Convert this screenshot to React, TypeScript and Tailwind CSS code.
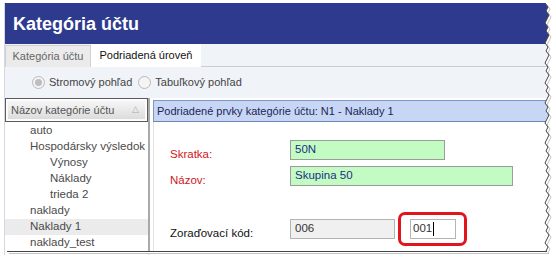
import React from "react";

const TREE = [
  { label: "auto", level: 0 },
  { label: "Hospodársky výsledok", level: 0 },
  { label: "Výnosy", level: 1 },
  { label: "Náklady", level: 1 },
  { label: "trieda 2", level: 1 },
  { label: "naklady", level: 0 },
  { label: "Naklady 1", level: 0, selected: true },
  { label: "naklady_test", level: 0 },
];

function Radio({ checked, label }: { checked?: boolean; label: string }) {
  return (
    <div className="flex items-center gap-[4px]">
      <span className="w-[13px] h-[13px] rounded-full border border-[#b9b9b9] bg-[#f4f4f4] flex items-center justify-center">
        {checked && <span className="w-[7px] h-[7px] rounded-full bg-[#bdbdbd]" />}
      </span>
      <span className="text-[#444]">{label}</span>
    </div>
  );
}

function TornEdge() {
  // jagged right + bottom edge, like a cut-out screenshot
  const right: string[] = [];
  for (let y = 0; y <= 250; y += 4) {
    const x = 547 + ((y * 7) % 5) - 2;
    right.push(`${x},${y + 3}`);
  }
  const bottom: string[] = [];
  for (let x = 547; x >= 4; x -= 4) {
    const y = 252 + ((x * 3) % 4) - 1.5;
    bottom.push(`${x},${y}`);
  }
  const pts = [...right, ...bottom].join(" ");
  return (
    <svg className="absolute left-0 top-0 pointer-events-none" width={556} height={264}>
      <polygon points={`${pts} 556,264 556,0`} fill="#ffffff" />
      <polyline points={pts} fill="none" stroke="#c4c4c4" strokeWidth={1} transform="translate(2,2)" />
      <polyline points={pts} fill="none" stroke="#444" strokeWidth={1} />
    </svg>
  );
}

export default function App() {
  return (
    <div
      className="relative w-[556px] h-[264px] bg-white overflow-hidden text-[11px]"
      style={{ fontFamily: "'Liberation Sans', Arial, sans-serif" }}
    >
      <div className="ml-[4px] mt-[3px] w-[548px] h-[252px] flex flex-col border-l border-[#d4d8e2] bg-[#f0f3f8]">
        {/* Title bar */}
        <div className="h-[41px] bg-[#2e3a8e] flex items-center pl-[8px]">
          <h1 className="text-white text-[18px] font-bold leading-none">Kategória účtu</h1>
        </div>

        {/* Tabs */}
        <div className="h-[23px] flex items-end">
          <div className="h-[22px] w-[86px] bg-[#ebebeb] border border-[#d0d0d0] border-b-0 flex items-center justify-center text-[#666]">
            Kategória účtu
          </div>
          <div className="h-[23px] w-[110px] bg-white flex items-center justify-center text-[#111]">
            Podriadená úroveň
          </div>
          <div className="flex-1 border-b border-[#c9ccd4]" />
        </div>

        {/* View mode */}
        <div className="h-[31px] flex items-center pl-[27px] gap-[6px]">
          <Radio checked label="Stromový pohľad" />
          <Radio label="Tabuľkový pohľad" />
        </div>

        {/* Content */}
        <div className="flex-1 flex bg-white">
          <div className="w-[145px] flex flex-col border-r-2 border-[#a9a9a9]">
            <div className="h-[24px] border border-[#5a5a5a] p-[1px]">
              <div className="h-full bg-gradient-to-b from-[#f6f6f6] to-[#dcdcdc] border border-[#fafafa] flex items-center justify-between pl-[3px] pr-[6px] text-[#555]">
                <span className="whitespace-nowrap">Názov kategórie účtu</span>
                <span className="text-[#aaa] text-[9px]">△</span>
              </div>
            </div>
            <div className="pt-[1px] flex flex-col">
              {TREE.map((t) => (
                <div
                  key={t.label}
                  className={`h-[16px] flex items-center whitespace-nowrap text-[#4a4a4a] text-[11.5px] ${t.selected ? "bg-[#ebebeb]" : ""}`}
                  style={{ paddingLeft: t.level ? 45 : 25 }}
                >
                  {t.label}
                </div>
              ))}
            </div>
          </div>

          <div className="flex-1 flex flex-col pl-[3px] pt-[2px] pr-[3px]">
            <div className="h-[22px] bg-[#c7d6f5] border border-[#7f95c4] border-b-[#6d84b5] flex items-center pl-[3px] text-[#1c2655]">
              Podriadené prvky kategórie účtu: N1 - Naklady 1
            </div>
            <div className="flex-1 border-l border-[#e2e2e2] pt-[18px] pl-[16px] text-[11.5px]">
              <div className="flex items-center h-[20px] mb-[6px]">
                <span className="w-[120px] text-[#d0161b] pt-[10px]">Skratka:</span>
                <div className="w-[155px] h-[20px] bg-[#c3fcc3] border border-[#9c9c9c] flex items-center pl-[4px] text-[#1b2f86]">
                  50N
                </div>
              </div>
              <div className="flex items-center h-[20px]">
                <span className="w-[120px] text-[#d0161b] pt-[10px]">Názov:</span>
                <div className="w-[223px] h-[20px] bg-[#c3fcc3] border border-[#9c9c9c] flex items-center pl-[4px] text-[#1b2f86]">
                  Skupina 50
                </div>
              </div>
              <div className="flex items-center h-[34px] mt-[26px]">
                <span className="w-[120px] text-[#111] pt-[9px]">Zoraďovací kód:</span>
                <div className="w-[105px] h-[20px] bg-[#f0f0f0] border border-[#b4b4b4] flex items-center pl-[4px] text-[#333]">
                  006
                </div>
                <div className="ml-[3px] w-[69px] h-[34px] border-[3px] border-[#e2141c] rounded-[7px] flex items-center pl-[9px]">
                  <div className="w-[46px] h-[20px] bg-white border border-[#b4b4b4] flex items-center pl-[2px] text-[#333]">
                    001<span className="w-px h-[14px] bg-black ml-px" />
                  </div>
                </div>
              </div>
            </div>
          </div>
        </div>
      </div>
      <TornEdge />
    </div>
  );
}
